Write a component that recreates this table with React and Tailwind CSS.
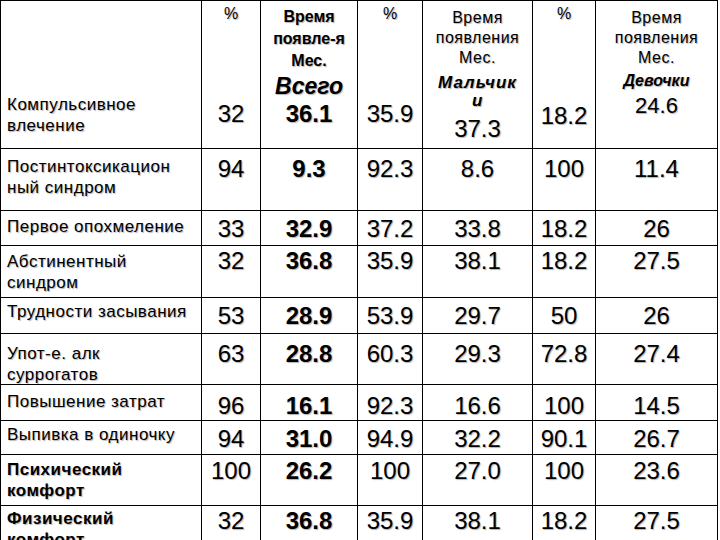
import React from "react";

// строки таблицы: подпись, значения по столбцам, отступы сверху
const rows = [
  {
    label: ["Постинтоксикацион", "ный синдром"],
    values: ["94", "9.3", "92.3", "8.6", "100", "11.4"],
    lp: "pt-[7px]",
    np: "pt-[6px]",
  },
  {
    label: ["Первое опохмеление"],
    values: ["33", "32.9", "37.2", "33.8", "18.2", "26"],
    lp: "pt-[5px]",
    np: "pt-[4px]",
  },
  {
    label: ["Абстинентный", "синдром"],
    values: ["32", "36.8", "35.9", "38.1", "18.2", "27.5"],
    lp: "pt-[5px]",
    np: "pt-[1px]",
  },
  {
    label: ["Трудности засывания"],
    values: ["53", "28.9", "53.9", "29.7", "50", "26"],
    lp: "pt-[3px]",
    np: "pt-[4px]",
  },
  {
    label: ["Упот-е. алк", "суррогатов"],
    values: ["63", "28.8", "60.3", "29.3", "72.8", "27.4"],
    lp: "pt-[9px]",
    np: "pt-[6px]",
  },
  {
    label: ["Повышение затрат"],
    values: ["96", "16.1", "92.3", "16.6", "100", "14.5"],
    lp: "pt-[6px]",
    np: "pt-[7px]",
  },
  {
    label: ["Выпивка в одиночку"],
    values: ["94", "31.0", "94.9", "32.2", "90.1", "26.7"],
    lp: "pt-[3px]",
    np: "pt-[4px]",
  },
  {
    label: ["Психический", "комфорт"],
    values: ["100", "26.2", "100", "27.0", "100", "23.6"],
    lp: "pt-[4px]",
    np: "pt-[2px]",
    bold: true,
  },
  {
    label: ["Физический", "комфорт"],
    values: ["32", "36.8", "35.9", "38.1", "18.2", "27.5"],
    lp: "pt-[2px]",
    np: "pt-[1px]",
    bold: true,
  },
];

const cell = "border-r border-b border-black";

const App = () => {
  return (
    <div className="h-[540px] w-[720px] overflow-hidden bg-white text-black font-['Liberation_Sans',Arial,sans-serif] [text-shadow:1px_1px_1px_rgba(0,0,0,0.3)]">
      <div className="grid w-[718px] grid-cols-[201px_59px_97px_65px_110px_63px_122px] grid-rows-[148px_62px_35px_52px_36px_51px_36px_34px_51px_50px] border-l border-t border-black">
        {/* шапка */}
        <div className={`${cell} flex flex-col justify-end pl-[6px] pb-[12px] text-[17px] leading-[21px] tracking-[0.5px]`}>
          <span>Компульсивное</span>
          <span>влечение</span>
        </div>
        <div className={`${cell} flex flex-col items-center pt-[3px]`}>
          <span className="text-[16px] leading-[20px]">%</span>
          <span className="mt-[76px] text-[24px] leading-[28px]">32</span>
        </div>
        <div className={`${cell} flex flex-col items-center pt-[5px] font-bold`}>
          <span className="text-[16px] leading-[22px]">Время</span>
          <span className="text-[16px] leading-[22px]">появле-я</span>
          <span className="text-[16px] leading-[22px]">Мес.</span>
          <span className="mt-[2px] text-[23px] leading-[24px] italic">Всего</span>
          <span className="mt-[2px] text-[24px] leading-[28px]">36.1</span>
        </div>
        <div className={`${cell} flex flex-col items-center pt-[3px]`}>
          <span className="text-[16px] leading-[20px]">%</span>
          <span className="mt-[76px] text-[24px] leading-[28px]">35.9</span>
        </div>
        <div className={`${cell} flex flex-col items-center pt-[7px] tracking-[0.5px]`}>
          <span className="text-[16px] leading-[20px]">Время</span>
          <span className="text-[16px] leading-[20px]">появления</span>
          <span className="text-[16px] leading-[20px]">Мес.</span>
          <span className="mt-[6px] text-[17px] leading-[18px] font-bold italic tracking-[1px]">Мальчик</span>
          <span className="text-[17px] leading-[18px] font-bold italic">и</span>
          <span className="mt-[5px] text-[24px] leading-[28px] tracking-normal">37.3</span>
        </div>
        <div className={`${cell} flex flex-col items-center pt-[3px]`}>
          <span className="text-[16px] leading-[20px]">%</span>
          <span className="mt-[78px] text-[24px] leading-[28px]">18.2</span>
        </div>
        <div className={`${cell} flex flex-col items-center pt-[7px] tracking-[0.5px]`}>
          <span className="text-[16px] leading-[20px]">Время</span>
          <span className="text-[16px] leading-[20px]">появления</span>
          <span className="text-[16px] leading-[20px]">Мес.</span>
          <span className="mt-[4px] text-[16px] leading-[18px] font-bold italic tracking-normal">Девочки</span>
          <span className="mt-[3px] text-[22px] leading-[26px] tracking-normal">24.6</span>
        </div>

        {/* данные */}
        {rows.map((row, i) => (
          <React.Fragment key={i}>
            <div
              className={`${cell} ${row.lp} pl-[6px] text-[17px] leading-[21px] tracking-[0.5px] ${
                row.bold ? "font-bold" : ""
              }`}
            >
              {row.label.map((line, j) => (
                <div key={j}>{line}</div>
              ))}
            </div>
            {row.values.map((v, j) => (
              <div
                key={j}
                className={`${cell} ${row.np} text-center text-[24px] leading-[28px] ${
                  j === 1 ? "font-bold" : ""
                }`}
              >
                {v}
              </div>
            ))}
          </React.Fragment>
        ))}
      </div>
    </div>
  );
};

export default App;
